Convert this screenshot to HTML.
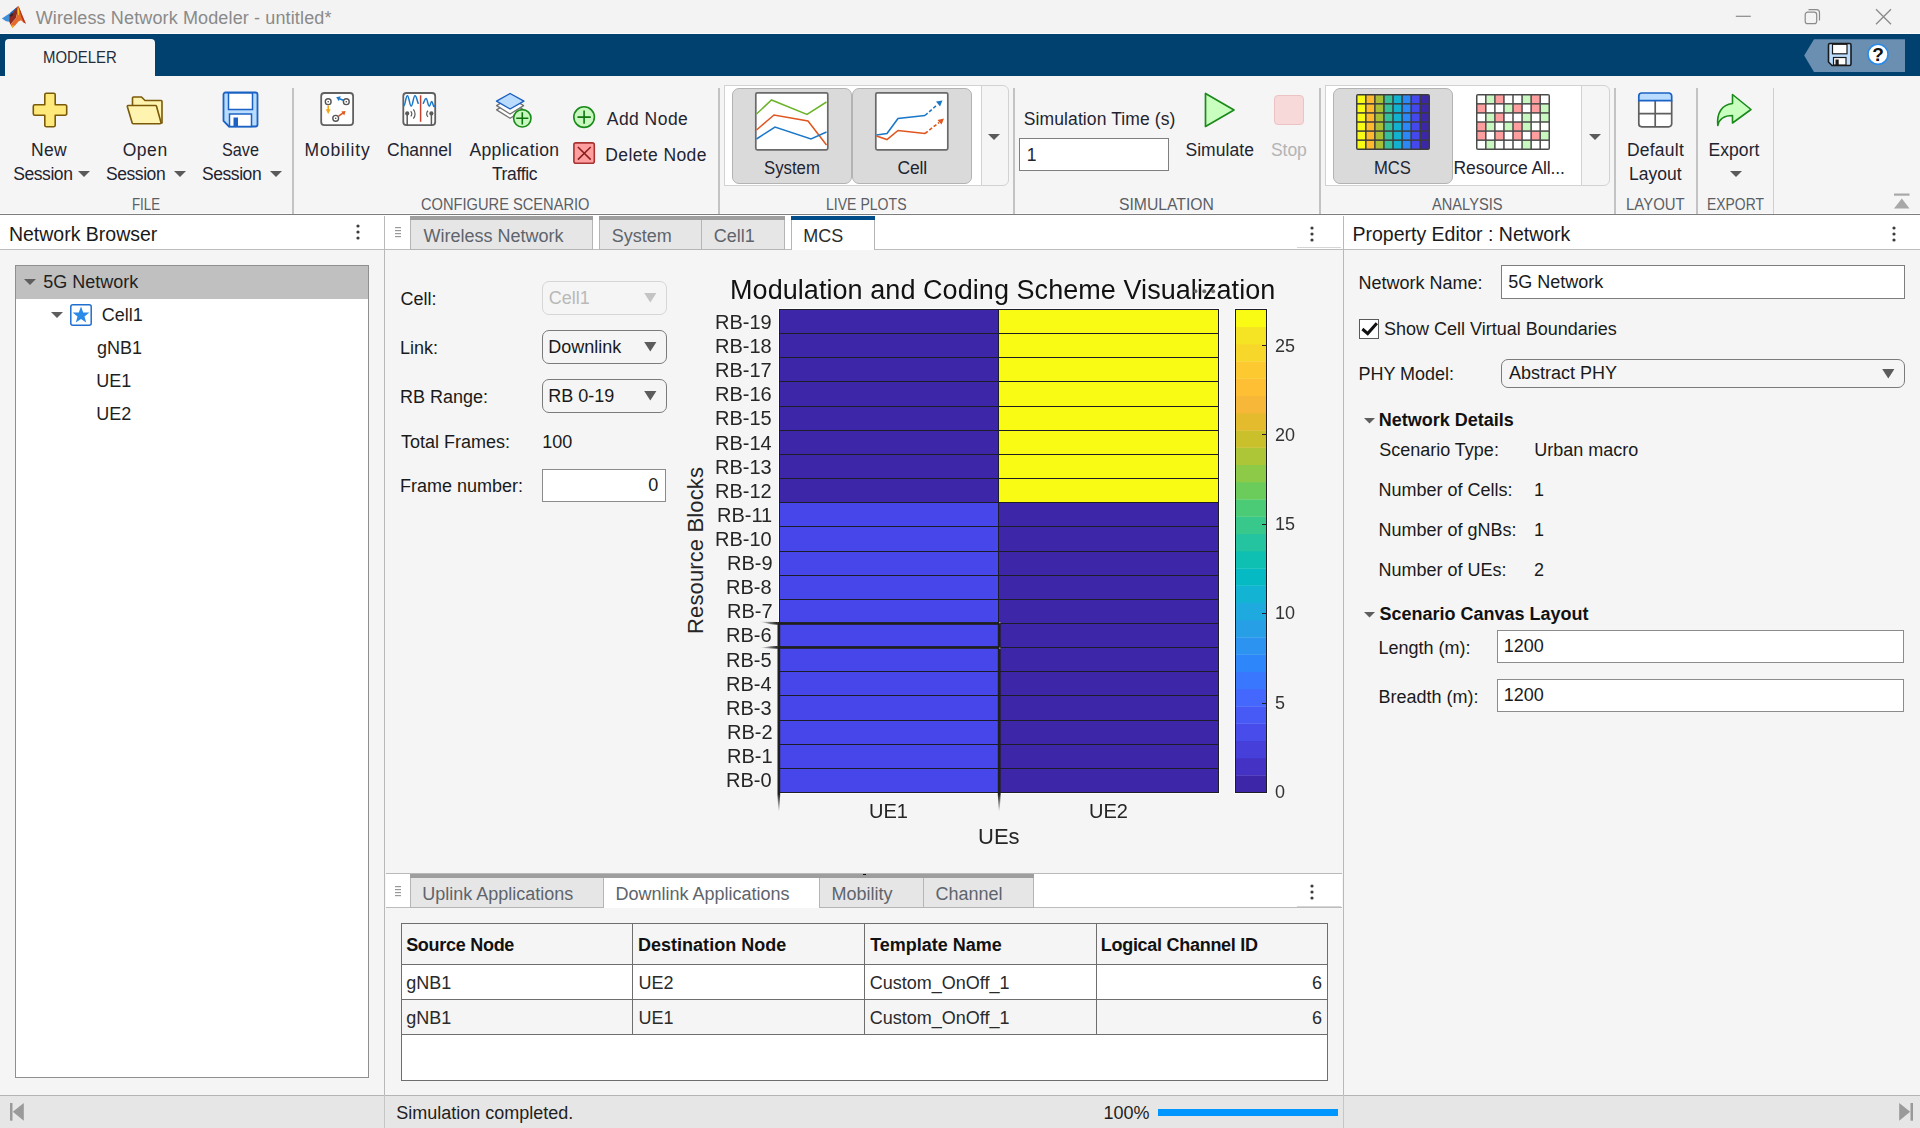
<!DOCTYPE html>
<html lang="en"><head><meta charset="utf-8"><title>Wireless Network Modeler - untitled*</title>
<style>
html,body{margin:0;padding:0}
body{width:1920px;height:1128px;position:relative;overflow:hidden;background:#f5f5f5;font-family:'Liberation Sans',sans-serif}
div,svg,span{position:absolute;box-sizing:border-box}
span{white-space:pre;line-height:1}
</style></head><body>
<div style="left:0px;top:0px;width:1920px;height:34px;background:#f3f3f3"></div>
<svg style="left:0px;top:0px" width="30" height="34" viewBox="0 0 30 34">
<polygon points="1.9,18.5 10,13 16.8,7.2 14.5,12.5 12.5,16 9.5,21.8 6,21.3" fill="#3d8fd8"/>
<polygon points="10,13 16.8,7.2 17.6,6 14.5,11.500 12,15" fill="#1f6cc0"/>
<polygon points="9.3,21.8 9.500,15.800 13,12.5 17.800,6 17.400,12 16,18 12.5,22 10.5,24.800" fill="#8e2a22"/>
<polygon points="9.2,15.300 12.500,13 13.200,15 10.800,17" fill="#3a2524"/>
<polygon points="18.200,5.700 19.500,8.500 22,15 25.900,23.800 23.500,22.500 21,20.300 18.500,21.500 15.500,25 12.400,27.900 11,25.500 10.500,24.800 13,21.500 16,18 17.400,12" fill="#e56b2c"/>
<polygon points="18.200,5.700 19.600,8.500 22.200,15 25.900,23.800 23.600,22.300 21.700,18 19.900,12" fill="#b9321f"/>
<polygon points="18.100,7.500 19,10 18.900,15 18,15" fill="#f7c81c"/>
<polygon points="11.800,25.200 14,25.400 13.500,27 12.400,27.800" fill="#f7b31c"/>
</svg>
<div style="left:0px;top:33px;width:1920px;height:1px;background:#fbfbfb"></div>
<svg style="left:1730px;top:4px" width="170" height="26" viewBox="0 0 170 26">
<path d="M5.8 12.3H20.8" stroke="#8a8a8a" stroke-width="1.2" fill="none"/>
<rect x="75.2" y="8.2" width="11.5" height="11.5" rx="2.5" fill="none" stroke="#8a8a8a" stroke-width="1.2"/>
<path d="M78.5 5.7H86.5a3 3 0 0 1 3 3V16.5" fill="none" stroke="#8a8a8a" stroke-width="1.2"/>
<path d="M146 5.3L161 20.3M161 5.3L146 20.3" stroke="#8a8a8a" stroke-width="1.3" fill="none"/>
</svg>
<div style="left:0px;top:34px;width:1920px;height:42px;background:#00416f"></div>
<div style="left:5px;top:39px;width:150px;height:37px;background:#f5f5f5;border-radius:4px 4px 0 0"></div>
<svg style="left:1800px;top:38px" width="110" height="36" viewBox="0 0 110 36">
<polygon points="4.2,17.5 14,1.2 105,1.2 105,34 14,34" fill="#6a8fb0"/>
<path d="M30 5.5h19.5a1.5 1.5 0 0 1 1.5 1.5v19a1.5 1.5 0 0 1 -1.5 1.5h-17.5l-3.5-3.5v-17a1.5 1.5 0 0 1 1.5-1.5z" fill="#b9dcff" stroke="#1a1a1a" stroke-width="1.6"/>
<rect x="32.5" y="6.3" width="14.5" height="9.5" fill="#fff" stroke="#1a1a1a" stroke-width="1.2"/>
<rect x="33.5" y="19.5" width="12.5" height="7.5" fill="#fff" stroke="#1a1a1a" stroke-width="1.2"/>
<rect x="35.5" y="21.5" width="3.2" height="5.5" fill="#1a1a1a"/>
<circle cx="78" cy="16.3" r="10" fill="#fff" stroke="#2b8ae8" stroke-width="1.6"/>
</svg>
<div style="left:0px;top:76px;width:1920px;height:138px;background:#f5f5f5"></div>
<div style="left:0px;top:213px;width:1920px;height:1px;background:#fbfbfb"></div>
<div style="left:0px;top:214px;width:1920px;height:1px;background:#7d7d7d"></div>
<div style="left:292px;top:88px;width:2px;height:126px;background:#c3c3c3"></div>
<div style="left:718px;top:88px;width:2px;height:126px;background:#c3c3c3"></div>
<div style="left:1013px;top:88px;width:2px;height:126px;background:#c3c3c3"></div>
<div style="left:1318.5px;top:88px;width:2px;height:126px;background:#c3c3c3"></div>
<div style="left:1614px;top:88px;width:2px;height:126px;background:#c3c3c3"></div>
<div style="left:1696px;top:88px;width:2px;height:126px;background:#c3c3c3"></div>
<div style="left:1773px;top:88px;width:1px;height:126px;background:#cfcfcf"></div>
<svg style="left:32px;top:92px" width="36" height="36" viewBox="0 0 36 36"><path d="M14.3 1.3h7.4a1.5 1.5 0 0 1 1.5 1.5v10h10a1.5 1.5 0 0 1 1.5 1.5v7.400a1.5 1.5 0 0 1 -1.5 1.5h-10v10a1.5 1.5 0 0 1 -1.5 1.5h-7.400a1.5 1.5 0 0 1 -1.5-1.5v-10h-10a1.5 1.5 0 0 1 -1.5-1.5v-7.400a1.5 1.5 0 0 1 1.5-1.5h10v-10a1.5 1.5 0 0 1 1.5-1.5z" fill="#ffe97a" stroke="#7a5a08" stroke-width="1.6" stroke-linejoin="round"/></svg>
<svg style="left:77.9px;top:171px" width="12" height="7" viewBox="0 0 12 7"><polygon points="0,0 12,0 6,6.100" fill="#5a5a5a"/></svg>
<svg style="left:126px;top:95px" width="38" height="30" viewBox="0 0 38 30">
<path d="M6.5 28V3a1 1 0 0 1 1-1h8l3.5 3.5h16a1 1 0 0 1 1 1v21.5z" fill="#fff3b0" stroke="#7a5a08" stroke-width="1.6" stroke-linejoin="round"/>
<path d="M2 10.5h27.5a1 1 0 0 1 1 .8l4.5 16.2a1 1 0 0 1 -1 1.2H7.2a1 1 0 0 1 -1-.8L1.3 11.5a.8 .8 0 0 1 .7-1z" fill="#fff3b0" stroke="#7a5a08" stroke-width="1.6" stroke-linejoin="round"/>
</svg>
<svg style="left:174.1px;top:171px" width="12" height="7" viewBox="0 0 12 7"><polygon points="0,0 12,0 6,6.100" fill="#5a5a5a"/></svg>
<svg style="left:222px;top:91px" width="37" height="37" viewBox="0 0 37 37">
<path d="M3.5 1.5h30a2 2 0 0 1 2 2v30a2 2 0 0 1 -2 2h-26.5l-5.5-5.5v-26.5a2 2 0 0 1 2-2z" fill="#b9dcff" stroke="#1b62c4" stroke-width="1.8"/>
<rect x="6.5" y="2" width="24" height="16.5" fill="#fff" stroke="#1b62c4" stroke-width="1.5"/>
<rect x="7.5" y="23" width="22" height="12.5" fill="#fff" stroke="#1b62c4" stroke-width="1.5"/>
<rect x="11.5" y="26.5" width="4.5" height="8.5" fill="#1b62c4"/>
</svg>
<svg style="left:270.2px;top:171px" width="12" height="7" viewBox="0 0 12 7"><polygon points="0,0 12,0 6,6.100" fill="#5a5a5a"/></svg>
<svg style="left:318px;top:90px" width="40" height="40" viewBox="318 90 40 40">
<rect x="321.200" y="93" width="31.900" height="32.200" rx="3.200" fill="#fff" stroke="#616161" stroke-width="1.800"/>
<g fill="#fff" stroke="#555" stroke-width="1.400">
<circle cx="328.200" cy="101.700" r="2.900"/><circle cx="346.300" cy="101.700" r="2.900"/><circle cx="335.700" cy="118.300" r="2.900"/></g>
<g fill="#444"><circle cx="328.200" cy="101.700" r="0.800"/><circle cx="346.300" cy="101.700" r="0.800"/><circle cx="335.700" cy="118.300" r="0.800"/></g>
<path d="M328.200 105.400V110" stroke="#f0a818" stroke-width="1.600"/><polygon points="325.700,109.200 330.700,109.200 328.200,113.900" fill="#f0a818"/>
<path d="M343.300 100.300L339.500 98.700" stroke="#1b78c8" stroke-width="1.600"/><polygon points="336.200,97.200 340.700,96.300 338.900,101.200" fill="#1b78c8"/>
<path d="M338.600 116.200L342.800 113.200" stroke="#e0561e" stroke-width="1.600"/><polygon points="345.600,111 341.300,111.600 344.200,115.600" fill="#e0561e"/>
</svg>
<svg style="left:400px;top:90px" width="40" height="40" viewBox="400 90 40 40">
<rect x="403.300" y="93" width="31.900" height="32.200" rx="3.200" fill="#fff" stroke="#616161" stroke-width="1.800"/>
<path d="M420.600 95.300V121.800" stroke="#c9402f" stroke-width="1.500"/>
<path d="M403.600 106.100C405.300 106.100 405.700 95.700 407.400 95.700C409.100 95.700 409.500 106.100 411.200 106.100C412.900 106.100 413.300 95.700 415 95.700C416.600 95.700 417.200 101.500 418.200 103.300" fill="none" stroke="#1b78c8" stroke-width="1.500" stroke-linecap="round"/>
<path d="M423.300 103.300C424.200 102 424.800 98.600 426 98.600C427.500 98.600 427.800 106.200 429.300 106.200C430.400 106.200 430.600 101.500 431.700 101.500C432.700 101.500 433 106.500 434 106.500C434.500 106.500 434.900 106 435.300 105.300" fill="none" stroke="#1b78c8" stroke-width="1.500" stroke-linecap="round"/>
<path d="M407.200 113.500V125.500M431.400 113.500V125.500" stroke="#5a5a5a" stroke-width="1.500"/>
<circle cx="407.200" cy="113.400" r="2.100" fill="#5a5a5a"/><circle cx="431.400" cy="113.400" r="2.100" fill="#5a5a5a"/>
<path d="M410.700 111.200a3.600 3.600 0 0 1 0 5.200M413.300 109.300a7 7 0 0 1 0 9.300" fill="none" stroke="#5a5a5a" stroke-width="1.200"/>
<path d="M428 110.700a4 4 0 0 0 0 6" fill="none" stroke="#5a5a5a" stroke-width="1.200"/>
</svg>
<svg style="left:494px;top:90px" width="42" height="42" viewBox="494 90 42 42">
<polygon points="510.100,101.500 496.600,109.900 510.100,118.300 523.600,109.900" fill="#fff" stroke="#737373" stroke-width="1.300" stroke-linejoin="round"/>
<polygon points="510.100,97.200 496.600,105.600 510.100,114 523.600,105.600" fill="#fff" stroke="#737373" stroke-width="1.300" stroke-linejoin="round"/>
<polygon points="510.100,93.500 496.500,101.100 510.100,109 523.900,101.100" fill="#b9dcff" stroke="#1b5fc0" stroke-width="1.400" stroke-linejoin="round"/>
<circle cx="522.300" cy="118.300" r="8.700" fill="#c8f7c0" stroke="#1a8a1a" stroke-width="1.600"/>
<path d="M522.300 112.200V124.400M516.200 118.300H528.400" stroke="#0f750f" stroke-width="1.600"/>
</svg>
<svg style="left:571px;top:104px" width="27" height="27" viewBox="571 104 27 27"><circle cx="584.100" cy="117.100" r="10.300" fill="#c8f7c0" stroke="#1a8a1a" stroke-width="1.600"/>
<path d="M584.100 110.600V123.800M577.500 117.100H590.800" stroke="#0f750f" stroke-width="1.600"/></svg>
<svg style="left:571px;top:140px" width="27" height="27" viewBox="571 140 27 27"><rect x="573.900" y="142.900" width="20.400" height="20.400" rx="2" fill="#ff9e9e" stroke="#a83232" stroke-width="1.600"/>
<path d="M577.900 147L590.700 159.600M590.700 147L577.900 159.600" stroke="#8a1c1c" stroke-width="1.500"/></svg>
<div style="left:724px;top:85px;width:257.5px;height:101px;background:#fff;border:1px solid #d2d2d2"></div>
<div style="left:980.5px;top:85px;width:28.5px;height:101px;background:#f5f5f5;border:1px solid #d2d2d2;border-radius:0 6px 6px 0"></div>
<div style="left:732px;top:88px;width:119.5px;height:95.5px;background:#dadada;border:1px solid #b3b3b3;border-radius:7px"></div>
<div style="left:852.2px;top:88px;width:119.5px;height:95.5px;background:#dadada;border:1px solid #b3b3b3;border-radius:7px"></div>
<svg style="left:754px;top:91px" width="76" height="61" viewBox="0 0 76 61">
<rect x="1.800" y="1.800" width="72" height="57" rx="1.500" fill="#fff" stroke="#6a6a6a" stroke-width="1.700"/>
<path d="M2.500 23L17.500 9L53 23.500L72.500 11" fill="none" stroke="#6cb52a" stroke-width="1.500"/>
<path d="M2.500 39L20 24L54 30L72.500 54" fill="none" stroke="#e0561e" stroke-width="1.500"/>
<path d="M2.500 48L21 36L57 48L72.500 41" fill="none" stroke="#1b78c8" stroke-width="1.500"/>
</svg>
<svg style="left:874px;top:91px" width="76" height="61" viewBox="0 0 76 61">
<rect x="1.800" y="1.800" width="72" height="57" rx="1.500" fill="#fff" stroke="#6a6a6a" stroke-width="1.700"/>
<path d="M2.500 44L13 42.500L24 27.500L51 24.500" fill="none" stroke="#1b78c8" stroke-width="1.600"/>
<path d="M51 24.500L63 14" fill="none" stroke="#1b78c8" stroke-width="1.600" stroke-dasharray="3.500 2"/>
<polygon points="68.500,9.500 62,10.500 66,15.500" fill="#1b78c8"/>
<path d="M2.500 45L13 48.500L24 39.500L51 42.500" fill="none" stroke="#e0561e" stroke-width="1.600"/>
<path d="M51 42.500L65 31.500" fill="none" stroke="#e0561e" stroke-width="1.600" stroke-dasharray="3.500 2"/>
<polygon points="70,27.500 63.500,29 67.500,33.500" fill="#e0561e"/>
</svg>
<svg style="left:988.2px;top:134px" width="12" height="7" viewBox="0 0 12 7"><polygon points="0,0 12,0 6,6.100" fill="#5a5a5a"/></svg>
<div style="left:1019px;top:138px;width:150px;height:33px;background:#fff;border:1px solid #7f7f7f"></div>
<svg style="left:1203px;top:90px" width="34" height="40" viewBox="0 0 34 40"><polygon points="2.500,3.500 2.500,36.500 31,20" fill="#c8ffbf" stroke="#1a8a1a" stroke-width="1.700" stroke-linejoin="round"/></svg>
<div style="left:1274px;top:95px;width:30px;height:30px;background:#f8d9d9;border:1px solid #ecc3c3;border-radius:4px"></div>
<div style="left:1325px;top:85px;width:257px;height:101px;background:#fff;border:1px solid #d2d2d2"></div>
<div style="left:1581px;top:85px;width:28.5px;height:101px;background:#f5f5f5;border:1px solid #d2d2d2;border-radius:0 6px 6px 0"></div>
<div style="left:1333.3px;top:88px;width:119.5px;height:95.5px;background:#dadada;border:1px solid #b3b3b3;border-radius:7px"></div>
<svg style="left:1356px;top:93.5px" width="74" height="56" viewBox="0 0 74 56"><rect x="0" y="0" width="74" height="56" rx="2" fill="#3c3c3c"/><rect x="1.50" y="1.50" width="7.56" height="7.58" fill="#f9fb15"/><rect x="1.50" y="10.58" width="7.56" height="7.58" fill="#f9fb15"/><rect x="1.50" y="19.67" width="7.56" height="7.58" fill="#f9fb15"/><rect x="1.50" y="28.75" width="7.56" height="7.58" fill="#f9fb15"/><rect x="1.50" y="37.83" width="7.56" height="7.58" fill="#f9fb15"/><rect x="1.50" y="46.92" width="7.56" height="7.58" fill="#f9fb15"/><rect x="10.56" y="1.50" width="7.56" height="7.58" fill="#feb92f"/><rect x="10.56" y="10.58" width="7.56" height="7.58" fill="#feb92f"/><rect x="10.56" y="19.67" width="7.56" height="7.58" fill="#feb92f"/><rect x="10.56" y="28.75" width="7.56" height="7.58" fill="#feb92f"/><rect x="10.56" y="37.83" width="7.56" height="7.58" fill="#feb92f"/><rect x="10.56" y="46.92" width="7.56" height="7.58" fill="#feb92f"/><rect x="19.62" y="1.50" width="7.56" height="7.58" fill="#a7be35"/><rect x="19.62" y="10.58" width="7.56" height="7.58" fill="#a7be35"/><rect x="19.62" y="19.67" width="7.56" height="7.58" fill="#a7be35"/><rect x="19.62" y="28.75" width="7.56" height="7.58" fill="#a7be35"/><rect x="19.62" y="37.83" width="7.56" height="7.58" fill="#a7be35"/><rect x="19.62" y="46.92" width="7.56" height="7.58" fill="#a7be35"/><rect x="28.69" y="1.50" width="7.56" height="7.58" fill="#34c09a"/><rect x="28.69" y="10.58" width="7.56" height="7.58" fill="#34c09a"/><rect x="28.69" y="19.67" width="7.56" height="7.58" fill="#34c09a"/><rect x="28.69" y="28.75" width="7.56" height="7.58" fill="#34c09a"/><rect x="28.69" y="37.83" width="7.56" height="7.58" fill="#34c09a"/><rect x="28.69" y="46.92" width="7.56" height="7.58" fill="#34c09a"/><rect x="37.75" y="1.50" width="7.56" height="7.58" fill="#12b1d0"/><rect x="37.75" y="10.58" width="7.56" height="7.58" fill="#12b1d0"/><rect x="37.75" y="19.67" width="7.56" height="7.58" fill="#12b1d0"/><rect x="37.75" y="28.75" width="7.56" height="7.58" fill="#12b1d0"/><rect x="37.75" y="37.83" width="7.56" height="7.58" fill="#12b1d0"/><rect x="37.75" y="46.92" width="7.56" height="7.58" fill="#12b1d0"/><rect x="46.81" y="1.50" width="7.56" height="7.58" fill="#2c88f7"/><rect x="46.81" y="10.58" width="7.56" height="7.58" fill="#2c88f7"/><rect x="46.81" y="19.67" width="7.56" height="7.58" fill="#2c88f7"/><rect x="46.81" y="28.75" width="7.56" height="7.58" fill="#2c88f7"/><rect x="46.81" y="37.83" width="7.56" height="7.58" fill="#2c88f7"/><rect x="46.81" y="46.92" width="7.56" height="7.58" fill="#2c88f7"/><rect x="55.88" y="1.50" width="7.56" height="7.58" fill="#4548ec"/><rect x="55.88" y="10.58" width="7.56" height="7.58" fill="#4548ec"/><rect x="55.88" y="19.67" width="7.56" height="7.58" fill="#4548ec"/><rect x="55.88" y="28.75" width="7.56" height="7.58" fill="#4548ec"/><rect x="55.88" y="37.83" width="7.56" height="7.58" fill="#4548ec"/><rect x="55.88" y="46.92" width="7.56" height="7.58" fill="#4548ec"/><rect x="64.94" y="1.50" width="7.56" height="7.58" fill="#3b27a8"/><rect x="64.94" y="10.58" width="7.56" height="7.58" fill="#3b27a8"/><rect x="64.94" y="19.67" width="7.56" height="7.58" fill="#3b27a8"/><rect x="64.94" y="28.75" width="7.56" height="7.58" fill="#3b27a8"/><rect x="64.94" y="37.83" width="7.56" height="7.58" fill="#3b27a8"/><rect x="64.94" y="46.92" width="7.56" height="7.58" fill="#3b27a8"/></svg>
<svg style="left:1476px;top:93.5px" width="74" height="56" viewBox="0 0 74 56"><rect x="0" y="0" width="74" height="56" rx="2" fill="#4a4a4a"/><rect x="1.50" y="1.50" width="7.56" height="7.58" fill="#ffffff"/><rect x="1.50" y="10.58" width="7.56" height="7.58" fill="#ff9e9e"/><rect x="1.50" y="19.67" width="7.56" height="7.58" fill="#ffffff"/><rect x="1.50" y="28.75" width="7.56" height="7.58" fill="#ff9e9e"/><rect x="1.50" y="37.83" width="7.56" height="7.58" fill="#ff9e9e"/><rect x="1.50" y="46.92" width="7.56" height="7.58" fill="#ffffff"/><rect x="10.56" y="1.50" width="7.56" height="7.58" fill="#c8f7c0"/><rect x="10.56" y="10.58" width="7.56" height="7.58" fill="#ffffff"/><rect x="10.56" y="19.67" width="7.56" height="7.58" fill="#c8f7c0"/><rect x="10.56" y="28.75" width="7.56" height="7.58" fill="#c8f7c0"/><rect x="10.56" y="37.83" width="7.56" height="7.58" fill="#ffffff"/><rect x="10.56" y="46.92" width="7.56" height="7.58" fill="#c8f7c0"/><rect x="19.62" y="1.50" width="7.56" height="7.58" fill="#ff9e9e"/><rect x="19.62" y="10.58" width="7.56" height="7.58" fill="#ffffff"/><rect x="19.62" y="19.67" width="7.56" height="7.58" fill="#ff9e9e"/><rect x="19.62" y="28.75" width="7.56" height="7.58" fill="#ffffff"/><rect x="19.62" y="37.83" width="7.56" height="7.58" fill="#ff9e9e"/><rect x="19.62" y="46.92" width="7.56" height="7.58" fill="#ffffff"/><rect x="28.69" y="1.50" width="7.56" height="7.58" fill="#ffffff"/><rect x="28.69" y="10.58" width="7.56" height="7.58" fill="#c8f7c0"/><rect x="28.69" y="19.67" width="7.56" height="7.58" fill="#ffffff"/><rect x="28.69" y="28.75" width="7.56" height="7.58" fill="#c8f7c0"/><rect x="28.69" y="37.83" width="7.56" height="7.58" fill="#ffffff"/><rect x="28.69" y="46.92" width="7.56" height="7.58" fill="#ffffff"/><rect x="37.75" y="1.50" width="7.56" height="7.58" fill="#ffffff"/><rect x="37.75" y="10.58" width="7.56" height="7.58" fill="#ff9e9e"/><rect x="37.75" y="19.67" width="7.56" height="7.58" fill="#ffffff"/><rect x="37.75" y="28.75" width="7.56" height="7.58" fill="#ff9e9e"/><rect x="37.75" y="37.83" width="7.56" height="7.58" fill="#ff9e9e"/><rect x="37.75" y="46.92" width="7.56" height="7.58" fill="#ffffff"/><rect x="46.81" y="1.50" width="7.56" height="7.58" fill="#c8f7c0"/><rect x="46.81" y="10.58" width="7.56" height="7.58" fill="#ffffff"/><rect x="46.81" y="19.67" width="7.56" height="7.58" fill="#c8f7c0"/><rect x="46.81" y="28.75" width="7.56" height="7.58" fill="#c8f7c0"/><rect x="46.81" y="37.83" width="7.56" height="7.58" fill="#ffffff"/><rect x="46.81" y="46.92" width="7.56" height="7.58" fill="#c8f7c0"/><rect x="55.88" y="1.50" width="7.56" height="7.58" fill="#ff9e9e"/><rect x="55.88" y="10.58" width="7.56" height="7.58" fill="#ff9e9e"/><rect x="55.88" y="19.67" width="7.56" height="7.58" fill="#ffffff"/><rect x="55.88" y="28.75" width="7.56" height="7.58" fill="#ffffff"/><rect x="55.88" y="37.83" width="7.56" height="7.58" fill="#ff9e9e"/><rect x="55.88" y="46.92" width="7.56" height="7.58" fill="#ffffff"/><rect x="64.94" y="1.50" width="7.56" height="7.58" fill="#ffffff"/><rect x="64.94" y="10.58" width="7.56" height="7.58" fill="#c8f7c0"/><rect x="64.94" y="19.67" width="7.56" height="7.58" fill="#c8f7c0"/><rect x="64.94" y="28.75" width="7.56" height="7.58" fill="#ffffff"/><rect x="64.94" y="37.83" width="7.56" height="7.58" fill="#c8f7c0"/><rect x="64.94" y="46.92" width="7.56" height="7.58" fill="#ffffff"/></svg>
<svg style="left:1589.2px;top:134px" width="12" height="7" viewBox="0 0 12 7"><polygon points="0,0 12,0 6,6.100" fill="#5a5a5a"/></svg>
<svg style="left:1637px;top:91px" width="37" height="39" viewBox="0 0 37 39">
<path d="M1.800 9.700V32.800a3 3 0 0 0 3 3H31.700a3 3 0 0 0 3-3V9.700" fill="#fff" stroke="#5f5f5f" stroke-width="1.700"/>
<path d="M18.200 9.700V35.800M1.800 22.600H34.700" stroke="#5f5f5f" stroke-width="1.700"/>
<path d="M1.800 9.700V5a3 3 0 0 1 3-3H31.700a3 3 0 0 1 3 3V9.700z" fill="#b9dcff" stroke="#1b62c4" stroke-width="1.700"/>
</svg>
<svg style="left:1715px;top:92px" width="39" height="36" viewBox="0 0 39 36">
<path d="M17.500 2.500L36 17.500L17.500 31V23.500C10 23.500 4.500 25.500 2.800 33.500C1.500 21 7 12.500 17.500 11.500z" fill="#c8ffbf" stroke="#1a8a1a" stroke-width="1.600" stroke-linejoin="round"/>
</svg>
<svg style="left:1729.9px;top:171px" width="12" height="7" viewBox="0 0 12 7"><polygon points="0,0 12,0 6,6.100" fill="#5a5a5a"/></svg>
<svg style="left:1893px;top:193px" width="18" height="17" viewBox="0 0 18 17"><rect x="1" y="0.500" width="15.500" height="2.200" fill="#a8a8a8"/><polygon points="8.800,5.500 16.500,15.500 1,15.500" fill="#a8a8a8"/></svg>
<div style="left:0px;top:215px;width:1920px;height:34px;background:#fff"></div>
<div style="left:0px;top:249px;width:1920px;height:1px;background:#bdbdbd"></div>
<div style="left:384px;top:216px;width:1px;height:912px;background:#b9b9b9"></div>
<div style="left:1343px;top:216px;width:1px;height:912px;background:#b9b9b9"></div>
<svg style="left:356px;top:224px" width="4" height="16" viewBox="0 0 4 16"><circle cx="2" cy="2" r="1.600" fill="#3c3c3c"/><circle cx="2" cy="8" r="1.600" fill="#3c3c3c"/><circle cx="2" cy="14" r="1.600" fill="#3c3c3c"/></svg>
<div style="left:15px;top:265px;width:354px;height:813px;background:#fff;border:1px solid #8f8f8f"></div>
<div style="left:16px;top:266px;width:352px;height:32.5px;background:#c0c0c0"></div>
<svg style="left:24px;top:279.3px" width="12" height="6" viewBox="0 0 12 6"><polygon points="0,0 12,0 6,6" fill="#5e5e5e"/></svg>
<svg style="left:51.3px;top:312.3px" width="12" height="6" viewBox="0 0 12 6"><polygon points="0,0 12,0 6,6" fill="#5e5e5e"/></svg>
<svg style="left:70px;top:304px" width="22" height="22" viewBox="0 0 22 22"><rect x="0.800" y="0.800" width="20.400" height="20.400" rx="2" fill="#fff" stroke="#1f6fd0" stroke-width="1.500"/>
<polygon points="11,2.600 13.200,8.400 19.400,8.600 14.500,12.500 16.200,18.600 11,15.100 5.800,18.600 7.500,12.500 2.600,8.600 8.800,8.400" fill="#2b8ae8"/></svg>
<svg style="left:395px;top:227px" width="7" height="11" viewBox="0 0 7 11"><rect x="0" y="0" width="6" height="1.200" fill="#999"/><rect x="0" y="3" width="6" height="1.200" fill="#999"/><rect x="0" y="6" width="6" height="1.200" fill="#999"/><rect x="0" y="9" width="6" height="1.200" fill="#999"/></svg>
<div style="left:410px;top:216px;width:183px;height:34px;background:#e6e6e6;border:1px solid #b5b5b5;border-top:none"></div>
<div style="left:410px;top:216px;width:183px;height:4px;background:#9e9e9e"></div>
<div style="left:599px;top:216px;width:103px;height:34px;background:#e6e6e6;border:1px solid #b5b5b5;border-top:none"></div>
<div style="left:599px;top:216px;width:103px;height:4px;background:#9e9e9e"></div>
<div style="left:701px;top:216px;width:84px;height:34px;background:#e6e6e6;border:1px solid #b5b5b5;border-top:none"></div>
<div style="left:701px;top:216px;width:84px;height:4px;background:#9e9e9e"></div>
<div style="left:791px;top:216px;width:84px;height:34px;background:#fff;border-left:1px solid #b5b5b5;border-right:1px solid #b5b5b5"></div>
<div style="left:791px;top:216px;width:84px;height:4px;background:#004c89"></div>
<svg style="left:1310px;top:225.5px" width="4" height="16" viewBox="0 0 4 16"><circle cx="2" cy="2" r="1.600" fill="#3c3c3c"/><circle cx="2" cy="8" r="1.600" fill="#3c3c3c"/><circle cx="2" cy="14" r="1.600" fill="#3c3c3c"/></svg>
<div style="left:1297px;top:247px;width:44px;height:1px;background:#d6d6d6"></div>
<div style="left:542px;top:281px;width:125px;height:34px;background:#f5f5f5;border:1px solid #d6d6d6;border-radius:7px"></div>
<svg style="left:643.6px;top:293px" width="13" height="9.5" viewBox="0 0 13 9.5"><polygon points="0.2,0 12.400,0 6.300,9.500" fill="#c4c4c4"/></svg>
<div style="left:542px;top:330px;width:125px;height:34px;background:#f5f5f5;border:1px solid #7b7b7b;border-radius:7px"></div>
<svg style="left:643.6px;top:342px" width="13" height="9.5" viewBox="0 0 13 9.5"><polygon points="0.2,0 12.400,0 6.300,9.500" fill="#5c5c5c"/></svg>
<div style="left:542px;top:379px;width:125px;height:34px;background:#f5f5f5;border:1px solid #7b7b7b;border-radius:7px"></div>
<svg style="left:643.6px;top:391px" width="13" height="9.5" viewBox="0 0 13 9.5"><polygon points="0.2,0 12.400,0 6.300,9.500" fill="#5c5c5c"/></svg>
<div style="left:542px;top:469px;width:124px;height:33px;background:#fff;border:1px solid #8c8c8c"></div>
<svg style="left:778px;top:308px" width="442" height="486" viewBox="-1 -1 442 486"><rect x="-1" y="-1" width="442" height="486" fill="#fdfdfd"/><rect x="0" y="0" width="440" height="484" fill="#3e26a8"/><rect x="220" y="0" width="220" height="193.70" fill="#f9fb15"/><rect x="0" y="193.70" width="220" height="289.80" fill="#4746eb"/><rect x="0" y="24" width="440" height="1" fill="#1d1d28"/><rect x="0" y="48" width="440" height="1" fill="#1d1d28"/><rect x="0" y="72" width="440" height="1" fill="#1d1d28"/><rect x="0" y="97" width="440" height="1" fill="#1d1d28"/><rect x="0" y="121" width="440" height="1" fill="#1d1d28"/><rect x="0" y="145" width="440" height="1" fill="#1d1d28"/><rect x="0" y="169" width="440" height="1" fill="#1d1d28"/><rect x="0" y="193" width="440" height="1" fill="#1d1d28"/><rect x="0" y="217" width="440" height="1" fill="#1d1d28"/><rect x="0" y="242" width="440" height="1" fill="#1d1d28"/><rect x="0" y="266" width="440" height="1" fill="#1d1d28"/><rect x="0" y="290" width="440" height="1" fill="#1d1d28"/><rect x="0" y="314" width="440" height="1" fill="#1d1d28"/><rect x="0" y="338" width="440" height="1" fill="#1d1d28"/><rect x="0" y="362" width="440" height="1" fill="#1d1d28"/><rect x="0" y="386" width="440" height="1" fill="#1d1d28"/><rect x="0" y="411" width="440" height="1" fill="#1d1d28"/><rect x="0" y="435" width="440" height="1" fill="#1d1d28"/><rect x="0" y="459" width="440" height="1" fill="#1d1d28"/><rect x="219" y="0" width="1" height="484" fill="#1d1d28"/><rect x="0.5" y="0.5" width="439" height="483" fill="none" stroke="#1d1d28" stroke-width="1"/></svg>
<svg style="left:755px;top:618px" width="250" height="196" viewBox="755 618 250 196"><defs><linearGradient id="gh" x1="0" x2="1" y1="0" y2="0"><stop offset="0" stop-color="#1f1f1c" stop-opacity="0"/><stop offset="1" stop-color="#1f1f1c"/></linearGradient>
<linearGradient id="gv" x1="0" x2="0" y1="0" y2="1"><stop offset="0" stop-color="#1f1f1c"/><stop offset="1" stop-color="#1f1f1c" stop-opacity="0"/></linearGradient></defs>
<rect x="777.5" y="622.1" width="223" height="2.700" fill="#1f1f1c"/>
<rect x="777.5" y="646.1" width="223" height="2.700" fill="#1f1f1c"/>
<polygon points="759.5,621.8 777.5,622.1 777.5,624.8 771,624.300" fill="url(#gh)"/>
<polygon points="759.5,647.800 771,646.300 777.5,646.100 777.5,648.800" fill="url(#gh)"/>
<rect x="777.5" y="622.1" width="2.700" height="172" fill="#1f1f1c"/>
<rect x="997.8" y="622.1" width="2.800" height="172" fill="#1f1f1c"/>
<polygon points="777.5,794 780.200,794 779.400,811.500 778.300,811.500" fill="url(#gv)"/>
<polygon points="997.800,794 1000.600,794 999.700,811.500 998.600,811.500" fill="url(#gv)"/>
<rect x="999.300" y="622.100" width="1.100" height="1.100" fill="#e8eef8"/><rect x="999.300" y="647.600" width="1.100" height="1.100" fill="#e8eef8"/></svg>
<svg style="left:1234px;top:308px" width="34" height="486" viewBox="-1 -1 34 486"><rect x="-1" y="-1" width="34" height="486" fill="#fdfdfd"/><rect x="0" y="466.25" width="32" height="17.55" fill="#3e26a8"/><rect x="0" y="449.00" width="32" height="17.55" fill="#4332c3"/><rect x="0" y="431.75" width="32" height="17.55" fill="#463fd9"/><rect x="0" y="414.50" width="32" height="17.55" fill="#474cea"/><rect x="0" y="397.25" width="32" height="17.55" fill="#485af6"/><rect x="0" y="380.00" width="32" height="17.55" fill="#4468fd"/><rect x="0" y="362.75" width="32" height="17.55" fill="#3a77ff"/><rect x="0" y="345.50" width="32" height="17.55" fill="#2e86fb"/><rect x="0" y="328.25" width="32" height="17.55" fill="#2c93f1"/><rect x="0" y="311.00" width="32" height="17.55" fill="#279fe6"/><rect x="0" y="293.75" width="32" height="17.55" fill="#1faadf"/><rect x="0" y="276.50" width="32" height="17.55" fill="#12b3d3"/><rect x="0" y="259.25" width="32" height="17.55" fill="#06bac4"/><rect x="0" y="242.00" width="32" height="17.55" fill="#0ec0b2"/><rect x="0" y="224.75" width="32" height="17.55" fill="#25c4a0"/><rect x="0" y="207.50" width="32" height="17.55" fill="#38c88c"/><rect x="0" y="190.25" width="32" height="17.55" fill="#4bcb75"/><rect x="0" y="173.00" width="32" height="17.55" fill="#6bcc5c"/><rect x="0" y="155.75" width="32" height="17.55" fill="#8cca47"/><rect x="0" y="138.50" width="32" height="17.55" fill="#adc637"/><rect x="0" y="121.25" width="32" height="17.55" fill="#cac02c"/><rect x="0" y="104.00" width="32" height="17.55" fill="#e4bb2d"/><rect x="0" y="86.75" width="32" height="17.55" fill="#f7b738"/><rect x="0" y="69.50" width="32" height="17.55" fill="#febf35"/><rect x="0" y="52.25" width="32" height="17.55" fill="#fcca30"/><rect x="0" y="35.00" width="32" height="17.55" fill="#f7d72a"/><rect x="0" y="17.75" width="32" height="17.55" fill="#f5e424"/><rect x="0" y="0.50" width="32" height="17.55" fill="#f9fb15"/><rect x="0.5" y="0.5" width="31" height="483" fill="none" stroke="#1d1d28" stroke-width="1"/><rect x="27" y="394" width="5" height="1" fill="#1d1d28"/><rect x="27" y="304" width="5" height="1" fill="#1d1d28"/><rect x="27" y="215" width="5" height="1" fill="#1d1d28"/><rect x="27" y="125" width="5" height="1" fill="#1d1d28"/><rect x="27" y="36" width="5" height="1" fill="#1d1d28"/></svg>
<div style="left:386px;top:873px;width:956px;height:1px;background:#b9b9b9"></div>
<div style="left:386px;top:874px;width:956px;height:33px;background:#fff"></div>
<div style="left:386px;top:907px;width:956px;height:1px;background:#bdbdbd"></div>
<svg style="left:395px;top:886px" width="7" height="11" viewBox="0 0 7 11"><rect x="0" y="0" width="6" height="1.200" fill="#999"/><rect x="0" y="3" width="6" height="1.200" fill="#999"/><rect x="0" y="6" width="6" height="1.200" fill="#999"/><rect x="0" y="9" width="6" height="1.200" fill="#999"/></svg>
<div style="left:410px;top:874px;width:194px;height:34px;background:#e6e6e6;border:1px solid #b5b5b5;border-top:none"></div>
<div style="left:410px;top:874px;width:194px;height:4px;background:#9e9e9e"></div>
<div style="left:603px;top:874px;width:217px;height:34px;background:#fff;border-left:1px solid #b5b5b5;border-right:1px solid #b5b5b5"></div>
<div style="left:603px;top:874px;width:217px;height:4px;background:#9e9e9e"></div>
<div style="left:819px;top:874px;width:105px;height:34px;background:#e6e6e6;border:1px solid #b5b5b5;border-top:none"></div>
<div style="left:819px;top:874px;width:105px;height:4px;background:#9e9e9e"></div>
<div style="left:923px;top:874px;width:111px;height:34px;background:#e6e6e6;border:1px solid #b5b5b5;border-top:none"></div>
<div style="left:923px;top:874px;width:111px;height:4px;background:#9e9e9e"></div>
<svg style="left:1310.3px;top:884px" width="4" height="16" viewBox="0 0 4 16"><circle cx="2" cy="2" r="1.600" fill="#3c3c3c"/><circle cx="2" cy="8" r="1.600" fill="#3c3c3c"/><circle cx="2" cy="14" r="1.600" fill="#3c3c3c"/></svg>
<div style="left:863px;top:874px;width:3px;height:1px;background:#111"></div>
<div style="left:1297px;top:906px;width:44px;height:1px;background:#d6d6d6"></div>
<div style="left:401px;top:923px;width:927px;height:157.5px;background:#fff;border:1px solid #6e6e6e"></div>
<div style="left:402px;top:924px;width:925px;height:40px;background:#f5f5f5"></div>
<div style="left:402px;top:999px;width:925px;height:35px;background:#f5f5f5"></div>
<div style="left:402px;top:964px;width:925px;height:1px;background:#6e6e6e"></div>
<div style="left:402px;top:999px;width:925px;height:1px;background:#6e6e6e"></div>
<div style="left:402px;top:1034px;width:925px;height:1px;background:#6e6e6e"></div>
<div style="left:632px;top:924px;width:1px;height:110px;background:#6e6e6e"></div>
<div style="left:864px;top:924px;width:1px;height:110px;background:#6e6e6e"></div>
<div style="left:1096px;top:924px;width:1px;height:110px;background:#6e6e6e"></div>
<svg style="left:1892px;top:225.5px" width="4" height="16" viewBox="0 0 4 16"><circle cx="2" cy="2" r="1.600" fill="#3c3c3c"/><circle cx="2" cy="8" r="1.600" fill="#3c3c3c"/><circle cx="2" cy="14" r="1.600" fill="#3c3c3c"/></svg>
<div style="left:1501px;top:265px;width:404px;height:34px;background:#fff;border:1px solid #7d7d7d"></div>
<div style="left:1359px;top:319px;width:20px;height:20px;background:#fff;border:1px solid #5a5a5a"></div>
<svg style="left:1359px;top:319px" width="20" height="20" viewBox="0 0 20 20"><path d="M3.400 10L8.700 14.600L17.800 4.300" fill="none" stroke="#111" stroke-width="3"/></svg>
<div style="left:1501px;top:359px;width:404px;height:29px;background:#f5f5f5;border:1px solid #7b7b7b;border-radius:7px"></div>
<svg style="left:1881.6px;top:369px" width="13" height="9.5" viewBox="0 0 13 9.5"><polygon points="0.2,0 12.400,0 6.300,9.500" fill="#5c5c5c"/></svg>
<svg style="left:1364.4px;top:417.5px" width="11" height="6" viewBox="0 0 11 6"><polygon points="0,0 11,0 5.500,5.500" fill="#5e5e5e"/></svg>
<svg style="left:1364.4px;top:611.5px" width="11" height="6" viewBox="0 0 11 6"><polygon points="0,0 11,0 5.500,5.500" fill="#5e5e5e"/></svg>
<div style="left:1496.5px;top:630px;width:407.5px;height:33px;background:#fff;border:1px solid #8c8c8c"></div>
<div style="left:1496.5px;top:679px;width:407.5px;height:33px;background:#fff;border:1px solid #8c8c8c"></div>
<div style="left:0px;top:1095px;width:1920px;height:33px;background:#e6e6e6"></div>
<div style="left:0px;top:1095px;width:1920px;height:1px;background:#b4b4b4"></div>
<div style="left:384px;top:1095px;width:1px;height:33px;background:#c6c6c6"></div>
<div style="left:1343px;top:1095px;width:1px;height:33px;background:#c6c6c6"></div>
<svg style="left:10px;top:1103px" width="14" height="18" viewBox="0 0 14 18"><rect x="0" y="0" width="2.500" height="17.700" fill="#9a9a9a"/><polygon points="13.800,0 13.800,17.700 2.800,8.850" fill="#9a9a9a"/></svg>
<svg style="left:1898.5px;top:1103px" width="14" height="18" viewBox="0 0 14 18"><rect x="11.500" y="0" width="2.500" height="17.700" fill="#9a9a9a"/><polygon points="0.200,0 0.200,17.700 11.200,8.850" fill="#9a9a9a"/></svg>
<div style="left:1158px;top:1109px;width:180px;height:7px;background:#0096ff"></div>
<span style="left:35.65px;top:9px;font-size:18px;color:#8a8a8a;letter-spacing:0.134px;">Wireless Network Modeler - untitled*</span>
<span style="left:42.58px;top:49px;font-size:17px;color:#1f2d3d;transform-origin:0 0;transform:scaleX(0.8771);">MODELER</span>
<span style="left:1872.25px;top:45px;font-size:19px;color:#111;font-weight:700;">?</span>
<span style="left:30.90px;top:142px;font-size:17.5px;color:#1f2430;letter-spacing:0.350px;">New</span>
<span style="left:13.15px;top:166px;font-size:17.5px;color:#1f2430;letter-spacing:-0.417px;">Session</span>
<span style="left:122.65px;top:142px;font-size:17.5px;color:#1f2430;letter-spacing:0.567px;">Open</span>
<span style="left:105.90px;top:166px;font-size:17.5px;color:#1f2430;letter-spacing:-0.417px;">Session</span>
<span style="left:221.97px;top:142px;font-size:17.5px;color:#1f2430;transform-origin:0 0;transform:scaleX(0.9263);">Save</span>
<span style="left:201.90px;top:166px;font-size:17.5px;color:#1f2430;letter-spacing:-0.417px;">Session</span>
<span style="left:132.03px;top:196px;font-size:17px;color:#5b5e64;transform-origin:0 0;transform:scaleX(0.7822);">FILE</span>
<span style="left:304.50px;top:142px;font-size:17.5px;color:#1f2430;letter-spacing:0.836px;">Mobility</span>
<span style="left:387.10px;top:142px;font-size:17.5px;color:#1f2430;letter-spacing:-0.083px;">Channel</span>
<span style="left:469.40px;top:142px;font-size:17.5px;color:#1f2430;letter-spacing:0.410px;">Application</span>
<span style="left:491.90px;top:166px;font-size:17.5px;color:#1f2430;letter-spacing:-0.325px;">Traffic</span>
<span style="left:606.80px;top:111px;font-size:17.5px;color:#1f2430;letter-spacing:0.457px;">Add Node</span>
<span style="left:605.30px;top:147px;font-size:17.5px;color:#1f2430;letter-spacing:0.380px;">Delete Node</span>
<span style="left:421.45px;top:196px;font-size:17px;color:#5b5e64;transform-origin:0 0;transform:scaleX(0.8619);">CONFIGURE SCENARIO</span>
<span style="left:764.14px;top:160px;font-size:17.5px;color:#1f2430;transform-origin:0 0;transform:scaleX(0.9582);">System</span>
<span style="left:897.40px;top:160px;font-size:17.5px;color:#1f2430;letter-spacing:-0.133px;">Cell</span>
<span style="left:826.16px;top:196px;font-size:17px;color:#5b5e64;transform-origin:0 0;transform:scaleX(0.8274);">LIVE PLOTS</span>
<span style="left:1023.80px;top:111px;font-size:17.5px;color:#1f2430;letter-spacing:0.103px;">Simulation Time (s)</span>
<span style="left:1026.65px;top:147px;font-size:17.5px;color:#1f2430;">1</span>
<span style="left:1185.40px;top:142px;font-size:17.5px;color:#1f2430;letter-spacing:0.079px;">Simulate</span>
<span style="left:1270.90px;top:142px;font-size:17.5px;color:#b4b4b4;letter-spacing:-0.017px;">Stop</span>
<span style="left:1119.41px;top:196px;font-size:17px;color:#5b5e64;transform-origin:0 0;transform:scaleX(0.9244);">SIMULATION</span>
<span style="left:1374.47px;top:160px;font-size:17.5px;color:#1f2430;transform-origin:0 0;transform:scaleX(0.9507);">MCS</span>
<span style="left:1453.60px;top:160px;font-size:17.5px;color:#1f2430;letter-spacing:-0.111px;">Resource All...</span>
<span style="left:1432.40px;top:196px;font-size:17px;color:#5b5e64;transform-origin:0 0;transform:scaleX(0.8605);">ANALYSIS</span>
<span style="left:1626.90px;top:142px;font-size:17.5px;color:#1f2430;letter-spacing:0.242px;">Default</span>
<span style="left:1628.90px;top:166px;font-size:17.5px;color:#1f2430;letter-spacing:0.040px;">Layout</span>
<span style="left:1626.08px;top:196px;font-size:17px;color:#5b5e64;transform-origin:0 0;transform:scaleX(0.8788);">LAYOUT</span>
<span style="left:1708.60px;top:142px;font-size:17.5px;color:#1f2430;letter-spacing:0.040px;">Export</span>
<span style="left:1706.67px;top:196px;font-size:17px;color:#5b5e64;transform-origin:0 0;transform:scaleX(0.8177);">EXPORT</span>
<span style="left:8.90px;top:225px;font-size:19.5px;color:#1a1a1a;">Network Browser</span>
<span style="left:43.25px;top:273px;font-size:18px;color:#1f1f1f;">5G Network</span>
<span style="left:101.70px;top:306px;font-size:18px;color:#1f1f1f;">Cell1</span>
<span style="left:96.95px;top:339px;font-size:18px;color:#1f1f1f;">gNB1</span>
<span style="left:96.20px;top:372px;font-size:18px;color:#1f1f1f;">UE1</span>
<span style="left:96.20px;top:405px;font-size:18px;color:#1f1f1f;">UE2</span>
<span style="left:423.45px;top:227px;font-size:18px;color:#5e646c;">Wireless Network</span>
<span style="left:611.65px;top:227px;font-size:18px;color:#5e646c;">System</span>
<span style="left:713.70px;top:227px;font-size:18px;color:#5e646c;">Cell1</span>
<span style="left:803.20px;top:227px;font-size:18px;color:#2c2c2c;">MCS</span>
<span style="left:400.50px;top:290px;font-size:18px;color:#1a1a1a;">Cell:</span>
<span style="left:548.70px;top:289px;font-size:18px;color:#b9b9b9;">Cell1</span>
<span style="left:400.00px;top:339px;font-size:18px;color:#1a1a1a;">Link:</span>
<span style="left:548.20px;top:338px;font-size:18px;color:#1a1a1a;">Downlink</span>
<span style="left:400.00px;top:388px;font-size:18px;color:#1a1a1a;">RB Range:</span>
<span style="left:548.20px;top:387px;font-size:18px;color:#1a1a1a;">RB 0-19</span>
<span style="left:401.00px;top:433px;font-size:18px;color:#1a1a1a;">Total Frames:</span>
<span style="left:542.15px;top:433px;font-size:18px;color:#1a1a1a;">100</span>
<span style="left:400.00px;top:477px;font-size:18px;color:#1a1a1a;">Frame number:</span>
<span style="left:648.35px;top:476px;font-size:18px;color:#1a1a1a;">0</span>
<span style="left:730.30px;top:277px;font-size:27px;color:#111;letter-spacing:0.060px;will-change:transform;">Modulation and Coding Scheme Visualization</span>
<span style="left:726.25px;top:770px;font-size:20px;color:#262626;will-change:transform;">RB-0</span>
<span style="left:726.50px;top:746px;font-size:20px;color:#262626;will-change:transform;">RB-1</span>
<span style="left:726.50px;top:722px;font-size:20px;color:#262626;will-change:transform;">RB-2</span>
<span style="left:726.25px;top:698px;font-size:20px;color:#262626;will-change:transform;">RB-3</span>
<span style="left:726.00px;top:674px;font-size:20px;color:#262626;will-change:transform;">RB-4</span>
<span style="left:726.25px;top:650px;font-size:20px;color:#262626;will-change:transform;">RB-5</span>
<span style="left:726.25px;top:625px;font-size:20px;color:#262626;will-change:transform;">RB-6</span>
<span style="left:726.50px;top:601px;font-size:20px;color:#262626;will-change:transform;">RB-7</span>
<span style="left:726.25px;top:577px;font-size:20px;color:#262626;will-change:transform;">RB-8</span>
<span style="left:726.50px;top:553px;font-size:20px;color:#262626;will-change:transform;">RB-9</span>
<span style="left:715.00px;top:529px;font-size:20px;color:#262626;will-change:transform;">RB-10</span>
<span style="left:716.75px;top:505px;font-size:20px;color:#262626;will-change:transform;">RB-11</span>
<span style="left:715.25px;top:481px;font-size:20px;color:#262626;will-change:transform;">RB-12</span>
<span style="left:715.25px;top:457px;font-size:20px;color:#262626;will-change:transform;">RB-13</span>
<span style="left:715.00px;top:433px;font-size:20px;color:#262626;will-change:transform;">RB-14</span>
<span style="left:715.25px;top:408px;font-size:20px;color:#262626;will-change:transform;">RB-15</span>
<span style="left:715.25px;top:384px;font-size:20px;color:#262626;will-change:transform;">RB-16</span>
<span style="left:715.25px;top:360px;font-size:20px;color:#262626;will-change:transform;">RB-17</span>
<span style="left:715.25px;top:336px;font-size:20px;color:#262626;will-change:transform;">RB-18</span>
<span style="left:715.25px;top:312px;font-size:20px;color:#262626;will-change:transform;">RB-19</span>
<span style="left:868.95px;top:801px;font-size:20px;color:#262626;will-change:transform;">UE1</span>
<span style="left:1089.25px;top:801px;font-size:20px;color:#262626;will-change:transform;">UE2</span>
<span style="left:977.75px;top:826px;font-size:22px;color:#262626;will-change:transform;">UEs</span>
<span style="left:703.50px;top:634.35px;font-size:22px;color:#262626;transform-origin:0 0;transform:rotate(-90deg) translateY(-18.62px);letter-spacing:0.136px;">Resource Blocks</span>
<span style="left:1275.15px;top:783px;font-size:18px;color:#333;will-change:transform;">0</span>
<span style="left:1275.15px;top:694px;font-size:18px;color:#333;will-change:transform;">5</span>
<span style="left:1274.65px;top:604px;font-size:18px;color:#333;will-change:transform;">10</span>
<span style="left:1274.65px;top:515px;font-size:18px;color:#333;will-change:transform;">15</span>
<span style="left:1274.90px;top:426px;font-size:18px;color:#333;will-change:transform;">20</span>
<span style="left:1274.90px;top:337px;font-size:18px;color:#333;will-change:transform;">25</span>
<span style="left:422.20px;top:885px;font-size:18px;color:#5e646c;">Uplink Applications</span>
<span style="left:615.45px;top:885px;font-size:18px;color:#5e646c;">Downlink Applications</span>
<span style="left:831.50px;top:885px;font-size:18px;color:#5e646c;">Mobility</span>
<span style="left:935.50px;top:885px;font-size:18px;color:#5e646c;">Channel</span>
<span style="left:406.15px;top:936px;font-size:18px;color:#111;font-weight:700;letter-spacing:-0.280px;">Source Node</span>
<span style="left:637.90px;top:936px;font-size:18px;color:#111;font-weight:700;letter-spacing:0.030px;">Destination Node</span>
<span style="left:870.15px;top:936px;font-size:18px;color:#111;font-weight:700;">Template Name</span>
<span style="left:1100.75px;top:936px;font-size:18px;color:#111;font-weight:700;letter-spacing:-0.282px;">Logical Channel ID</span>
<span style="left:406.20px;top:974px;font-size:18px;color:#2a2a2a;">gNB1</span>
<span style="left:638.45px;top:974px;font-size:18px;color:#2a2a2a;">UE2</span>
<span style="left:869.70px;top:974px;font-size:18px;color:#2a2a2a;">Custom_OnOff_1</span>
<span style="left:1312.05px;top:974px;font-size:18px;color:#2a2a2a;">6</span>
<span style="left:406.20px;top:1009px;font-size:18px;color:#2a2a2a;">gNB1</span>
<span style="left:638.45px;top:1009px;font-size:18px;color:#2a2a2a;">UE1</span>
<span style="left:869.70px;top:1009px;font-size:18px;color:#2a2a2a;">Custom_OnOff_1</span>
<span style="left:1312.05px;top:1009px;font-size:18px;color:#2a2a2a;">6</span>
<span style="left:1352.50px;top:225px;font-size:19.5px;color:#1a1a1a;">Property Editor : Network</span>
<span style="left:1358.40px;top:274px;font-size:18px;color:#1a1a1a;">Network Name:</span>
<span style="left:1508.25px;top:273px;font-size:18px;color:#1a1a1a;">5G Network</span>
<span style="left:1384.05px;top:320px;font-size:18px;color:#1a1a1a;">Show Cell Virtual Boundaries</span>
<span style="left:1358.40px;top:365px;font-size:18px;color:#1a1a1a;">PHY Model:</span>
<span style="left:1508.90px;top:364px;font-size:18px;color:#1a1a1a;">Abstract PHY</span>
<span style="left:1378.65px;top:411px;font-size:18px;color:#111;font-weight:700;">Network Details</span>
<span style="left:1379.15px;top:441px;font-size:18px;color:#1a1a1a;">Scenario Type:</span>
<span style="left:1534.20px;top:441px;font-size:18px;color:#1a1a1a;">Urban macro</span>
<span style="left:1378.40px;top:481px;font-size:18px;color:#1a1a1a;">Number of Cells:</span>
<span style="left:1534.05px;top:481px;font-size:18px;color:#1a1a1a;">1</span>
<span style="left:1378.40px;top:521px;font-size:18px;color:#1a1a1a;">Number of gNBs:</span>
<span style="left:1534.05px;top:521px;font-size:18px;color:#1a1a1a;">1</span>
<span style="left:1378.40px;top:561px;font-size:18px;color:#1a1a1a;">Number of UEs:</span>
<span style="left:1534.10px;top:561px;font-size:18px;color:#1a1a1a;">2</span>
<span style="left:1379.40px;top:605px;font-size:18px;color:#111;font-weight:700;">Scenario Canvas Layout</span>
<span style="left:1378.40px;top:639px;font-size:18px;color:#1a1a1a;">Length (m):</span>
<span style="left:1503.65px;top:637px;font-size:18px;color:#1a1a1a;">1200</span>
<span style="left:1378.40px;top:688px;font-size:18px;color:#1a1a1a;">Breadth (m):</span>
<span style="left:1503.65px;top:686px;font-size:18px;color:#1a1a1a;">1200</span>
<span style="left:396.15px;top:1104px;font-size:18px;color:#1f1f1f;">Simulation completed.</span>
<span style="left:1103.45px;top:1104px;font-size:18px;color:#1f1f1f;">100%</span>
<svg style="left:1192px;top:288px" width="26" height="7" viewBox="0 0 26 7"><circle cx="3.500" cy="3.200" r="1.900" fill="#6b6b6b"/><circle cx="12.300" cy="3.200" r="2" fill="#6b6b6b"/><circle cx="21.200" cy="3.200" r="2" fill="#6b6b6b"/></svg>
</body></html>
